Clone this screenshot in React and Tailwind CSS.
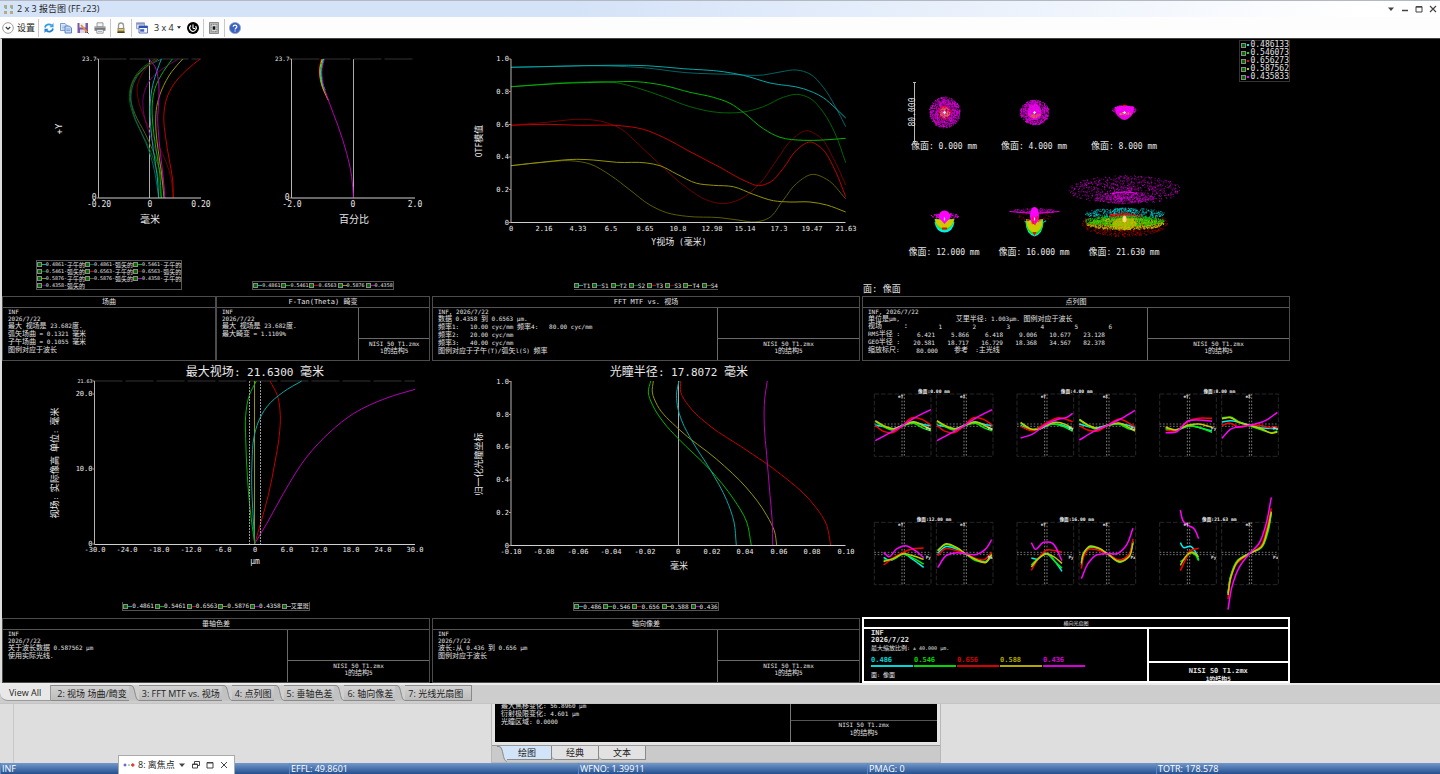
import { Fragment } from 'react'
import clsx from 'clsx'

const MONO = "[font-family:'DejaVu_Sans_Mono','Noto_Sans_CJK_SC',monospace]"
const UI = "[font-family:'Open_Sans','Noto_Sans_CJK_SC',sans-serif]"

const C = {
  cyan: '#00a8a8', green: '#00b400', red: '#c00000', yellow: '#949400', magenta: '#b400b4',
  dcyan: '#006464', dgreen: '#006400', dred: '#6e0000', dyellow: '#5c5c00', dmagenta: '#6a006a',
}
const BRIGHT = { cyan: '#00f0f0', green: '#00ee00', red: '#ff0000', yellow: '#c8c800', magenta: '#ff00ff' }

/* ---------- helpers ---------- */

// smooth path through a list of points, tangents weighted by chord length
function spline(pts) {
  const len = pts.slice(1).map((p, i) => Math.hypot(p[0] - pts[i][0], p[1] - pts[i][1]))
  const slope = (i, k) => (pts[i + 1][k] - pts[i][k]) / len[i]
  const tangent = (i, k) => {
    if (i === 0) return slope(0, k)
    if (i === pts.length - 1) return slope(i - 1, k)
    return (slope(i - 1, k) * len[i] + slope(i, k) * len[i - 1]) / (len[i - 1] + len[i])
  }
  let d = `M${pts[0][0]} ${pts[0][1]}`
  for (let i = 0; i < len.length; i++) {
    const h = len[i] / 3
    const [a, b] = [pts[i], pts[i + 1]]
    d += `C${a[0] + tangent(i, 0) * h} ${a[1] + tangent(i, 1) * h} ${b[0] - tangent(i + 1, 0) * h} ${b[1] - tangent(i + 1, 1) * h} ${b[0]} ${b[1]}`
  }
  return d
}

// "1,2 3,4" -> [[1,2],[3,4]]
const parse = (s) => s.trim().split(/\s+/).map(p => p.split(',').map(Number))

function rng(seed) {
  let a = seed
  return () => {
    a = (a + 0x6d2b79f5) | 0
    let t = Math.imul(a ^ (a >>> 15), 1 | a)
    t = (t + Math.imul(t ^ (t >>> 7), 61 | t)) ^ t
    return ((t ^ (t >>> 14)) >>> 0) / 4294967296
  }
}

// Han characters are set one step larger than the Latin ones
function Mix({ text, cjk, svg }) {
  return text.split(/([\u4e00-\u9fff]+)/).map((s, i) => {
    if (!s) return null
    if (i % 2 === 0) return <Fragment key={i}>{s}</Fragment>
    return svg ? <tspan key={i} className={cjk}>{s}</tspan> : <span key={i} className={cjk}>{s}</span>
  })
}

function Label({ x, y, text, size = 'text-[7px]', cjk = 'text-[9px]', anchor = 'middle', up }) {
  return (
    <text
      x={x} y={y} textAnchor={anchor} xmlSpace="preserve"
      className={clsx('fill-[#e8e8e8]', size)}
      transform={up ? `rotate(-90 ${x} ${y})` : undefined}
    >
      <Mix text={text} cjk={cjk} svg />
    </text>
  )
}

/* ---------- plots ---------- */

// All plots share one sheet coordinate system, the viewBox picks the cell.
function Plot({ view, box, xTicks, yTicks, curves, zero, topLine, tick = 'text-[7px]', tickDy = 6, children }) {
  const [l, t, r, b] = box
  return (
    <svg viewBox={view} className="block h-auto w-full">
      {zero && <path d={`M${zero} ${t}V${b}`} stroke="#aaa" strokeWidth="1" />}
      {topLine && <path d={`M${l} ${t}H${r}`} stroke="#333" strokeDasharray="28 3" />}
      {curves.map(([color, pts, w = 1], i) => (
        <path key={i} d={spline(parse(pts))} fill="none" stroke={color} strokeWidth={w} />
      ))}
      <path d={`M${l} ${t}V${b}`} fill="none" stroke="#b4b4b4" />
      <path d={`M${l} ${b}H${r}`} fill="none" stroke="#d0d0d0" />
      {xTicks.map((s, i) => (
        <Label key={s} x={Math.round(l + (r - l) * i / (xTicks.length - 1))} y={b + tickDy} text={s} size={tick} />
      ))}
      {yTicks.map(([y, s, size]) => (
        <Fragment key={s}>
          <path d={`M${l - 2} ${y}h2`} stroke="#999" />
          <Label x={l - 2} y={y + 2} text={s} size={size || tick} anchor="end" />
        </Fragment>
      ))}
      {children}
    </svg>
  )
}

const FIELD_CURVES = [
  [C.dgreen, '155.3,59 140,70 131.7,83.3 129.3,96.7 133.3,115 141.7,133.3 150,150 157.3,173.3 161.3,198'],
  [C.dyellow, '158.3,59 141.7,70 132.3,83.3 130.3,96.7 134.7,113.3 145,133.3 153.3,151.7 161,175 164.7,198'],
  [C.dcyan, '161.7,59 146.7,66.7 135,80 131,95 134,115 141.7,133.3 149.3,151.7 155.3,175 158.7,198'],
  [C.dred, '156.7,59 143.3,71.7 137.3,86.7 138.3,100 143.3,115 151.7,133.3 162.3,153.3 170.7,176.7 173.3,198'],
  [C.dmagenta, '178.3,59 163.3,68.3 150,80 143.3,96.7 144,115 149.3,133.3 156.7,153.3 162.7,176.7 164.7,198'],
  [C.cyan, '161.3,59 156.7,71.7 151.7,90 150,106.7 150.7,126.7 153.3,150 157.3,176.7 158.7,198'],
  [C.green, '172.3,59 163.3,71.7 155,88.3 152.3,103 152.7,123 155.7,147 159.7,173 161.3,198'],
  [C.red, '200,59 186.7,70 173.3,85 166.7,98.3 163.8,116.7 165.5,136.7 169.3,160 172.7,180 173.3,198'],
  [C.yellow, '182.7,59 171.7,71.7 161.7,90 156.7,106.7 155.7,123 157.7,147 161.5,173 164,198'],
  [C.magenta, '149,59 155,66.7 158.3,80 159,96.7 157.7,116.7 159,140 162,166.7 164,186.7 164.7,198'],
]

const DISTORTION_CURVES = [
  [BRIGHT.red, '321.4,59 319.4,68.3 321,83.3 328,100'],
  [BRIGHT.yellow, '322.2,59 320,68.3 321.4,83.3 328.2,100'],
  [BRIGHT.green, '323,59 320.7,68.3 321.8,83.3 326,94'],
  [BRIGHT.cyan, '323.7,59 321.5,68.3 322.5,83.3 325,90'],
  [C.magenta, '324.4,59 322,68.3 323,83.3 328.3,100 338.3,126.7 346.7,153.3 351.7,176.7 353.4,198'],
]

const MTF_CURVES = [
  [C.dcyan, '511,67.3 610,66 643.3,67.7 686.7,72.7 730,74.3 763.3,75 780,72 796.7,70 810,74 823.3,87.3 835,106 845.7,126.7'],
  [C.dgreen, '511,86.7 583.3,82 613.3,82.3 636.7,87.7 663.3,96.7 690,106.7 716.7,112.3 743.3,112 763.3,106.7 783.3,97.3 796.7,94.3 810,98.3 823.3,112.3 835,133.3 845.7,162.7'],
  [C.dred, '511,125.3 546.7,122.3 583.3,119.3 603.3,121.7 620,128.3 640,145.7 663.3,167.7 686.7,187.7 706.7,200 723.3,203.7 740,199.3 760,183.3 776.7,160 793.3,138.3 806.7,130.7 820,137.3 833.3,158.3 845.7,185'],
  [C.dyellow, '511,165.7 546.7,162 570,160.7 590,164 610,175 630,190 650,205 666.7,212.7 686.7,216.3 720,217.7 740,220.3 755,222 768.3,218.3 783.3,200 796.7,183.3 813.3,174.3 826.7,179.3 845.7,198.7'],
  [C.cyan, '511,67.3 560,66.3 610,65.3 646.7,65.7 683.3,68.7 723.3,71.7 743.3,75.3 770,83 803.3,88.7 823.3,97.7 835,107.7 845.7,118'],
  [C.green, '511,86.7 563.3,83.3 610,82 636.7,81.7 663.3,85.3 690,92.3 713.3,97.3 730,103.3 743.3,112.3 763.3,128.7 780,137.3 803.3,140.3 823.3,140 845.7,138.3'],
  [C.red, '511,125.3 546.7,124.3 580,125.3 620,125.7 643.3,129.3 663.3,137.3 690,151.7 720,167.3 746.7,181.7 758.3,185.7 770,182.3 783.3,168.3 796.7,150 810,142 821.7,148.3 833.3,166.7 845.7,196.7'],
  [C.yellow, '511,165.7 546.7,161.7 576.7,159.3 593.3,160 616.7,162.3 646.7,163 660,165.7 676.7,174 696.7,183.3 713.3,185.3 733.3,186.7 753.3,194.3 773.3,200.7 790,202 810,202 826.7,205 845.7,212'],
]

const LATERAL_CURVES = [
  [C.yellow, '254.5,381 254.5,544'],
  [C.red, '270,381 277.3,395.3 280.3,415.3 279.3,435.3 275,462 268.3,495.3 261,522 254.7,543.7'],
  [C.magenta, '415,389.3 386.7,398 353.3,413.7 330,432 306.7,457 283.3,493.7 266.7,523.7 254.7,543.7'],
  [C.cyan, '301.7,381 283.3,392 266.7,407 258.3,422 254,437 252,462 251.7,485.3 252.7,508.7 254.7,543.7'],
  [C.green, '256.3,381 249.3,395.3 245.7,415.3 245.7,438.7 247.3,475.3 250,508.7 254.7,543.7'],
]

const AXIAL_CURVES = [
  [C.green, '650.7,381 648.3,392 652.7,405.3 663.3,422 678.3,438.7 710,469.7 733.3,498.7 746.7,522 751.3,545.3'],
  [C.yellow, '653.3,381 652.3,392 657.3,405.3 678.3,428.7 716.7,459.3 746.7,488 766.7,515.3 774.7,532 776.7,545.3'],
  [C.cyan, '679,381 676.7,392 677.3,405.3 682.3,422 691.7,440.3 710,469.3 726.7,500.3 734,522 736.3,545.3'],
  [C.red, '680.7,381 680.7,392 688.3,405.3 710,426 743.3,448 780,473.7 810,500.3 826.7,525.3 830.7,545.3'],
  [C.magenta, '767.3,381 764.7,398.7 764.3,425.3 766.7,455.3 770,495.3 772.3,522 772.7,545.3'],
]

/* ---------- spot diagram ---------- */

// cloud of 1px rays inside an ellipse; pow < .5 pushes them to the rim
function Cloud({ cx, cy, rx, ry, n, color, seed = 1, pow = 0.5, top = -1, bottom = 1 }) {
  const rand = rng(seed * 977 + n)
  let d = ''
  for (let i = 0; i < n; i++) {
    const a = rand() * Math.PI * 2
    const r = Math.pow(rand(), pow)
    const v = Math.sin(a) * r
    if (v < top || v > bottom) continue
    d += `M${(cx + Math.cos(a) * r * rx).toFixed(1)} ${(cy + v * ry).toFixed(1)}h.8`
  }
  return <path d={d} stroke={color} strokeWidth=".8" fill="none" />
}

function SpotDiagram() {
  const B = BRIGHT
  return (
    <svg viewBox="862 39 428 245" className="block h-auto w-full">
      <path d="M914.5 82V142M913 82.5h3M913 141.5h3" stroke="#b8b8b8" fill="none" />
      <Label x={915} y={112} text="80.000" size="text-[8px]" up />

      {/* 0 mm */}
      <Cloud cx={944.5} cy={112.5} rx={15.5} ry={15.5} n={1250} color="#e000e0" seed={1} pow={0.6} />
      <Cloud cx={944.5} cy={112.5} rx={7} ry={7} n={90} color={B.red} seed={2} />
      <Cloud cx={944.5} cy={112.5} rx={5} ry={5} n={90} color="#e08060" seed={3} />
      {/* 4 mm */}
      <Cloud cx={1034.5} cy={112.5} rx={14.5} ry={12.5} n={950} color="#e000e0" seed={4} />
      <ellipse cx="1034.5" cy="112" rx="7" ry="8" fill={B.magenta} opacity=".75" />
      <Cloud cx={1034.5} cy={114} rx={6} ry={4} n={130} color="#e06050" seed={5} top={0} />
      {/* 8 mm */}
      <Cloud cx={1124.5} cy={110} rx={12.5} ry={4.5} n={210} color="#e000e0" seed={6} />
      <path d="M1115 107Q1124.5 104 1134 107Q1134 115 1129 118Q1124.5 122 1120 118Q1115 115 1115 107Z" fill={B.magenta} opacity=".9" />
      <path d="M1123 105.5h3" stroke={B.red} strokeWidth="1.5" />
      <Cloud cx={1124.5} cy={114} rx={6} ry={1.5} n={40} color="#e08040" seed={7} />

      {/* 12 mm */}
      <path d="M934.5 222Q936 232 944.5 232.5Q953 232 954.5 222Z" fill={B.cyan} />
      <path d="M934.5 219Q936 229 944.5 230.5Q953 229 954.5 219Z" fill={B.green} />
      <path d="M935 219Q944 221 954 219Q953 228 944.5 228.5Q936 228 935 219Z" fill="#d0c800" />
      <path d="M942 227.5h5v2h-5z" fill={B.red} />
      <Cloud cx={944.5} cy={216} rx={14} ry={3} n={150} color={B.magenta} seed={8} />
      <path d="M938.5 218Q939 210.5 944.5 210.5Q950 210.5 950.5 218Q948 220 944.5 224Q941 220 938.5 218Z" fill={B.magenta} />
      {/* 16 mm */}
      <path d="M1025.5 222Q1026 234 1034.5 236.5Q1043 234 1043.5 222Z" fill={B.cyan} />
      <path d="M1025.5 221Q1027 234 1034.5 235Q1042 234 1043.5 221Z" fill={B.green} />
      <path d="M1026 219Q1034.5 221 1043 219Q1042 232 1034.5 232.5Q1027 232 1026 219Z" fill="#d0c800" />
      <path d="M1032.5 232h4l-2 4z" fill={B.red} />
      <Cloud cx={1034.5} cy={216.5} rx={16} ry={5} n={60} color="#a00000" seed={9} pow={0.2} />
      <Cloud cx={1034.5} cy={221.5} rx={12} ry={1.5} n={20} color={B.cyan} seed={15} pow={0.1} />
      <Cloud cx={1034.5} cy={211} rx={22} ry={2.5} n={140} color="#d000d0" seed={10} />
      <path d="M1009.5 211.5L1034.5 213.5L1059.5 211.5" stroke="#e000e0" fill="none" />
      <ellipse cx="1034.5" cy="215.5" rx="4.5" ry="8.5" fill={B.magenta} />
      <Cloud cx={1034.5} cy={220} rx={4} ry={5} n={40} color={B.red} seed={11} />
      {/* 21.63 mm */}
      <Cloud cx={1124.5} cy={190} rx={56} ry={14.5} n={850} color="#c800c8" seed={12} pow={0.6} bottom={0.85} />
      <Cloud cx={1124.5} cy={198} rx={30} ry={6} n={380} color="#d800d8" seed={13} pow={0.7} />
      <path d="M1112 193.5Q1124.500 190.500 1137 193.500" fill="none" stroke={B.magenta} strokeWidth="1.5" opacity=".8" />
      <Cloud cx={1124.5} cy={214} rx={40} ry={6} n={430} color="#00d8d8" seed={14} pow={0.35} />
      <Cloud cx={1124.5} cy={213} rx={15} ry={5} n={200} color="#00d8d8" seed={24} />
      <Cloud cx={1124.5} cy={223} rx={43} ry={14} n={900} color="#c00000" seed={16} pow={0.5} top={-0.4} />
      <Cloud cx={1124.5} cy={216} rx={17} ry={3} n={220} color={B.red} seed={17} />
      <Cloud cx={1124.5} cy={224} rx={39} ry={6} n={1200} color="#c8c000" seed={19} />
      <Cloud cx={1124.5} cy={221} rx={40} ry={5} n={650} color="#00d800" seed={18} pow={0.4} />
      <ellipse cx="1124.5" cy="224" rx="12" ry="6" fill="#c8c000" opacity=".7" />
      <ellipse cx="1124.5" cy="219" rx="2" ry="3.5" fill="#ffd860" />

      {[944.5, 1034.5, 1124.5].map(x => (
        <g key={x} stroke="#ffd8e8" strokeWidth="1.2">
          <path d={`M${x - 1.5} 112.5h3M${x} 111v3`} />
          <path d={`M${x} 217.5v3`} />
        </g>
      ))}

      {[['0.000', '12.000'], ['4.000', '16.000'], ['8.000', '21.630']].map(([a, b], i) => (
        <Fragment key={a}>
          <Label x={944 + i * 90} y={149} text={`像面: ${a} mm`} size="text-[8px]" />
          <Label x={944 + i * 90} y={255} text={`像面: ${b} mm`} size="text-[8px]" />
        </Fragment>
      ))}
    </svg>
  )
}

/* ---------- ray fans ---------- */

const FANS = [
  {
    title: '0.00', x: 37, y: 42,
    a: {
      cyan: '40,135 70,141 95,146 123,136 155,127 185,134 207,137',
      green: '40,124 65,140 95,150 123,137 155,130 185,145 207,152',
      red: '40,137 65,154 90,158 123,136 150,113 180,118 207,136',
      yellow: '40,122 65,137 95,146 123,136 155,125 185,138 207,148',
      magenta: '40,182 90,155 123,136 160,112 207,89',
    },
    b: {
      cyan: '225,135 255,141 280,146 308,136 340,127 370,134 391,137',
      green: '225,124 250,140 280,150 308,137 340,130 370,145 391,152',
      red: '225,137 250,154 275,158 308,136 335,113 365,118 391,136',
      yellow: '225,122 250,137 280,146 308,136 340,125 370,138 391,148',
      magenta: '225,182 275,155 308,136 345,112 391,89',
    },
  },
  {
    title: '4.00', x: 465, y: 42,
    a: {
      cyan: '476,136 505,149 535,146 570,132 600,135 632,148',
      green: '476,129 505,149 551,136 575,132 605,140 632,154',
      red: '476,139 510,152 551,130 590,113 632,125',
      yellow: '476,127 505,146 530,148 551,137 580,127 610,133 632,146',
      magenta: '476,174 510,163 551,134 590,117 615,112 632,100',
    },
    b: {
      cyan: '652,132 700,144 736,136 775,131 819,142',
      green: '652,120 680,138 705,148 736,137 770,132 800,146 819,151',
      red: '652,137 680,151 710,152 736,136 770,118 819,140',
      yellow: '652,118 680,136 705,145 736,136 770,129 800,142 819,153',
      magenta: '652,180 700,152 736,136 775,117 819,91',
    },
  },
  {
    title: '8.00', x: 893, y: 42,
    a: {
      cyan: '911,148 945,150 985,137 1015,144 1050,153',
      green: '911,145 940,149 980,138 1010,142 1050,157',
      red: '911,150 940,153 980,123 1010,115 1050,115',
      yellow: '911,141 940,150 980,135 1010,132 1050,142',
      magenta: '911,158 940,157 980,122 1010,120 1050,124',
    },
    b: {
      cyan: '1080,126 1105,122 1163,136 1200,144 1246,146',
      green: '1080,114 1105,111 1130,125 1163,137 1200,150 1230,158 1246,153',
      red: '1080,137 1100,129 1130,141 1163,136 1200,137 1225,143 1246,140',
      yellow: '1080,116 1105,113 1130,127 1163,136 1200,147 1230,160 1246,156',
      magenta: '1080,175 1105,148 1163,136 1210,122 1246,97',
    },
  },
  {
    title: '12.00', x: 37, y: 427,
    a: {
      cyan: '65,532 80,541 125,521 155,540 185,562',
      green: '65,541 95,537 125,522 155,535 185,552',
      red: '65,555 95,533 123,517 150,507 185,504',
      yellow: '65,545 95,535 123,521 155,528 185,538',
      magenta: '65,517 80,530 105,506 130,497 160,512 185,533',
    },
    b: {
      cyan: '227,520 250,500 285,508 310,522 345,538 370,545 389,530',
      green: '227,510 250,494 285,505 310,521 345,543 370,546 389,521',
      red: '227,527 250,506 280,511 310,521 345,537 365,540 389,517',
      yellow: '227,513 250,492 285,503 310,521 345,540 370,548 389,524',
      magenta: '227,563 255,525 285,518 310,521 345,523 370,508 389,479',
    },
  },
  {
    title: '16.00', x: 465, y: 427,
    a: {
      cyan: '508,534 525,538 550,520 575,540 600,574',
      green: '508,555 535,530 555,521 580,545 600,565',
      red: '508,571 530,535 555,510 580,512 600,517',
      yellow: '508,561 530,535 553,521 575,530 600,550',
      magenta: '508,488 520,508 545,487 565,487 600,542',
    },
    b: {
      cyan: '658,556 665,526 685,502 710,506 736,521 775,541 800,526 813,484',
      green: '658,548 665,518 685,501 710,506 736,521 775,547 800,529 813,486',
      red: '658,566 665,530 680,508 705,509 736,521 775,540 800,525 813,477',
      yellow: '658,550 665,520 685,498 710,504 736,521 775,545 800,532 813,490',
      magenta: '658,596 680,548 700,527 736,521 765,521 790,500 813,445',
    },
  },
  {
    title: '21.63', x: 893, y: 427,
    a: {
      cyan: '955,488 965,503 985,499 1000,515 1010,540',
      green: '955,545 970,535 985,518 1000,525 1010,542',
      red: '955,572 970,540 985,512 1010,505',
      yellow: '955,556 975,525 990,516 1010,530',
      magenta: '955,390 965,425 980,437 995,445 1010,476',
    },
    b: {
      cyan: '1098,640 1107,588 1130,541 1163,520 1195,504 1216,456 1228,398',
      green: '1098,640 1106,588 1127,541 1163,520 1198,503 1217,458 1228,398',
      red: '1098,657 1105,600 1125,550 1163,520 1195,500 1213,450 1228,385',
      yellow: '1098,645 1107,590 1128,543 1163,520 1197,502 1215,455 1228,395',
      magenta: '1098,689 1110,620 1130,565 1163,520 1190,492 1210,440 1228,352',
    },
  },
]

// drawn at three units per pixel
function RayFans() {
  return (
    <svg viewBox="0 -54 1284 765" className="block h-auto w-full">
      {FANS.map(f => (
        <g key={f.title}>
          {[0, 186].map(dx => (
            <g key={dx} transform={`translate(${f.x + dx} ${f.y})`} fill="none">
              <rect width="170" height="187" stroke="#3a3a3a" strokeWidth="2" strokeDasharray="14 6" />
              <path d="M0 90H170M0 97H170" stroke="#888" strokeWidth="2.5" strokeDasharray="5 5" />
              <path d="M83 0V187M90 0V187" stroke="#999" strokeWidth="2.5" strokeDasharray="5 5" />
            </g>
          ))}
          {['a', 'b'].map(k => Object.entries(f[k]).map(([c, pts]) => (
            <path key={k + c} d={spline(parse(pts))} stroke={BRIGHT[c]} strokeWidth="4.5" fill="none" />
          )))}
          {[0, 186].map(dx => (
            <g key={dx} className="fill-[#ddd] text-[13px] font-bold">
              <text x={f.x + dx + 79} y={f.y + 12} textAnchor="middle">{dx ? 'eX' : 'eY'}</text>
              <text x={f.x + dx + 162} y={f.y + 109} textAnchor="middle">{dx ? 'Px' : 'Py'}</text>
            </g>
          ))}
          <text x={f.x + 179} y={f.y - 3} textAnchor="middle" className="fill-[#eee] text-[14px] font-bold">像面:{f.title} mm</text>
        </g>
      ))}
    </svg>
  )
}

/* ---------- legends and captions ---------- */

function Legend({ items, className, size = 'text-[5px] leading-[7px]', cjk = 'text-[6px]' }) {
  return (
    <div className="flex flex-1 items-end justify-center">
      <div className={clsx('border border-[#555]', size, className)}>
        {items.map(([name, color]) => (
          <label key={name} className="flex items-center whitespace-nowrap">
            <Tick />
            <span className="h-px w-1 shrink-0" style={{ background: color }} />
            <Mix text={name} cjk={cjk} />
          </label>
        ))}
      </div>
    </div>
  )
}

function Tick() {
  return <input type="checkbox" defaultChecked className="size-[5px] shrink-0 appearance-none border border-[#8c8c8c] checked:bg-[#006c00]" />
}

function Stamp({ bold }) {
  return (
    <div className={clsx('flex w-1/3 flex-col', bold ? 'border-l-2 border-white' : 'border-l border-[#6a6a6a]')}>
      <div className={clsx(bold ? 'h-[34px] border-b-2 border-white' : 'h-[31px] border-b border-[#6a6a6a]')} />
      <div className={clsx('text-center', bold ? 'pt-1 text-[7px] leading-[8px] font-bold' : 'pt-px')}>
        <p>NISI 50 T1.zmx</p>
        <p className={clsx(bold && 'text-[6px]')}><Mix text="1的结构5" cjk={bold ? 'text-[6px]' : 'text-[7px]'} /></p>
      </div>
    </div>
  )
}

function Info({ title, lines = [], stamp = true, children }) {
  return (
    <section className="flex h-[65px] flex-1 flex-col border border-[#4c4c4c] text-[6px] leading-[7px]">
      <h2 className="h-[11px] border-b border-[#555] text-center text-[7px] leading-[10px]">{title}</h2>
      <div className="flex flex-1">
        <div className="flex-1 px-[5px] whitespace-pre">
          {lines.map(l => <p key={l}><Mix text={l} cjk="text-[7px]" /></p>)}
          {children}
        </div>
        {stamp && <Stamp />}
      </div>
    </section>
  )
}

const SPOT_ROWS = [
  ['RMS半径 :', '6.421', '5.866', '6.418', '9.006', '10.677', '23.128'],
  ['GEO半径 :', '20.581', '18.717', '16.729', '18.368', '34.567', '82.378'],
]

function SpotTable() {
  return (
    <table className="table-fixed border-collapse">
      <thead>
        <tr>
          <th className="w-10 p-0 font-normal">
            <span className="flex justify-between text-[7px]"><span>视场</span><span>:</span></span>
          </th>
          {[1, 2, 3, 4, 5, 6].map(n => <th key={n} className="w-[34px] p-0 text-right font-normal">{n}</th>)}
        </tr>
      </thead>
      <tbody>
        {SPOT_ROWS.map(([name, ...vals]) => (
          <tr key={name}>
            <th className="p-0 text-left font-normal"><Mix text={name} cjk="text-[7px]" /></th>
            {vals.map(v => <td key={v} className="p-0 pr-[7px] text-right">{v}</td>)}
          </tr>
        ))}
        <tr>
          <th className="p-0 text-left font-normal"><Mix text="缩放标尺:" cjk="text-[7px]" /></th>
          <td className="p-0 pr-1 text-right">80.000</td>
          <td colSpan={5} className="p-0 pl-3"><Mix text="参考  :主光线" cjk="text-[7px]" /></td>
        </tr>
      </tbody>
    </table>
  )
}

const FAN_WAVES = [
  ['0.486', 'border-[#00d8d8] text-[#00d8d8]'],
  ['0.546', 'border-[#00d800] text-[#00d800]'],
  ['0.656', 'border-[#d80000] text-[#d80000]'],
  ['0.588', 'border-[#b0a800] text-[#b0a800]'],
  ['0.436', 'border-[#d800d8] text-[#d800d8]'],
]

function FanInfo() {
  return (
    <section className="flex h-[66px] flex-col overflow-hidden border-2 border-white text-[6px] leading-[7px]">
      <h2 className="h-[10px] border-b-2 border-white text-center text-[5px] leading-[8px]">横向光扇图</h2>
      <div className="flex flex-1">
        <div className="flex-1 pt-px pl-[7px]">
          <p className="text-[7px] font-bold">INF</p>
          <p className="text-[7px] font-bold">2026/7/22</p>
          <p className="text-[5px]"><Mix text="最大缩放比例: ± 40.000 μm." cjk="text-[6px]" /></p>
          <ul className="flex gap-px pt-[3px] text-[7px] leading-[10px] font-bold">
            {FAN_WAVES.map(([w, cls]) => <li key={w} className={clsx('w-[42px] border-b-2', cls)}>{w}</li>)}
          </ul>
          <p className="pt-1 text-[5px]"><Mix text="面: 像面" cjk="text-[6px]" /></p>
        </div>
        <Stamp bold />
      </div>
    </section>
  )
}

function Cell({ children }) {
  return <div className="relative flex min-w-0 flex-col">{children}</div>
}

function Report() {
  return (
    <main className={clsx('grid grid-cols-[1fr_1fr_1fr_148px] gap-x-[2px] gap-y-px border-t border-l-2 border-t-[#444] border-l-[#ddd] bg-black text-[#e0e0e0]', MONO)}>
      <Cell>
        <div className="flex flex-1 pb-[6px]">
          <div className="flex flex-1 flex-col">
            <Plot
              view="2 39 214 220" box={[98.5, 59, 201, 198]} zero={149.5} topLine tick="text-[8px]" tickDy={9}
              xTicks={['-0.20', '0', '0.20']} yTicks={[[59, '23.7', 'text-[6px]'], [198, '0']]} curves={FIELD_CURVES}
            >
              <Label x={150} y={223} text="毫米" cjk="text-[10px]" />
              <Label x={62} y={129} text="+Y" size="text-[9px]" up />
            </Plot>
            <Legend
              className="grid grid-cols-3"
              items={[
                ['0.4861-子午的', C.cyan], ['0.4861-弧矢的', C.dcyan], ['0.5461-子午的', C.green],
                ['0.5461-弧矢的', C.dgreen], ['0.6563-子午的', C.red], ['0.6563-弧矢的', C.dred],
                ['0.5876-子午的', C.yellow], ['0.5876-弧矢的', C.dyellow], ['0.4358-子午的', C.magenta],
                ['0.4358-弧矢的', C.dmagenta],
              ]}
            />
          </div>
          <div className="flex flex-1 flex-col">
            <Plot
              view="216 39 214 220" box={[291.5, 59, 415, 198]} zero={353.5} topLine tick="text-[8px]" tickDy={9}
              xTicks={['-2.0', '0', '2.0']} yTicks={[[59, '23.7', 'text-[6px]'], [198, '0']]} curves={DISTORTION_CURVES}
            >
              <Label x={354} y={223} text="百分比" cjk="text-[10px]" />
            </Plot>
            <Legend
              className="flex gap-px"
              items={[['0.4861', C.cyan], ['0.5461', C.green], ['0.6563', C.red], ['0.5876', C.yellow], ['0.4358', C.magenta]]}
            />
          </div>
        </div>
        <div className="flex">
          <Info title="场曲" stamp={false} lines={['INF', '2026/7/22', '最大 视场是 23.682度.', '弧矢场曲 = 0.1321 毫米', '子午场曲 = 0.1055 毫米', '图例对应于波长']} />
          <Info title="F-Tan(Theta) 畸变" lines={['INF', '2026/7/22', '最大 视场是 23.682度.', '最大畸变 = 1.1109%']} />
        </div>
      </Cell>

      <Cell>
        <div className="flex flex-1 flex-col pb-[6px]">
          <Plot
            view="432 39 428 240" box={[511, 59, 845.5, 222.5]}
            xTicks={['0', '2.16', '4.33', '6.5', '8.65', '10.8', '12.98', '15.14', '17.3', '19.47', '21.63']}
            yTicks={[[59, '1.0'], [91.5, '0.8'], [124.5, '0.6'], [157, '0.4'], [189.5, '0.2'], [222.5, '0']]}
            curves={MTF_CURVES} tickDy={8}
          >
            <Label x={679} y={245} text="Y视场 (毫米)" size="text-[8px]" />
            <Label x={482} y={141} text="OTF模值" size="text-[8px]" up />
          </Plot>
          <Legend
            className="flex gap-0.5 border-x-0 border-t-0" size="text-[6px] leading-[7px]"
            items={[['T1', C.cyan], ['S1', C.dcyan], ['T2', C.green], ['S2', C.dgreen], ['T3', C.red], ['S3', C.dred], ['T4', C.yellow], ['S4', C.dyellow]]}
          />
        </div>
        <div className="flex">
          <Info title="FFT MTF vs. 视场" lines={['INF, 2026/7/22', '数据 0.4358 到 0.6563 μm.', '频率1:   10.00 cyc/mm 频率4:   80.00 cyc/mm', '频率2:   20.00 cyc/mm', '频率3:   40.00 cyc/mm', '图例对应于子午(T)/弧矢l(S) 频率']} />
        </div>
      </Cell>

      <Cell>
        <SpotDiagram />
        <div className="absolute top-px right-0 border border-[#333] pl-px text-[8px] leading-[8px]">
          {[['0.486133', BRIGHT.cyan], ['0.546073', BRIGHT.green], ['0.656273', BRIGHT.red], ['0.587562', BRIGHT.yellow], ['0.435833', BRIGHT.magenta]].map(([v, c]) => (
            <label key={v} className="flex items-center">
              <Tick />
              <span className="mx-px size-[2px]" style={{ background: c }} />
              {v}
            </label>
          ))}
        </div>
        <p className="flex-1 pb-px pl-px text-[9px] leading-[11px]">面: 像面</p>
        <div className="flex">
          <Info title="点列图">
            <p>INF, 2026/7/22</p>
            <p className="flex gap-14"><span><Mix text="单位是μm," cjk="text-[7px]" /></span><span><Mix text="艾里半径: 1.003μm. 图例对应于波长" cjk="text-[7px]" /></span></p>
            <SpotTable />
          </Info>
        </div>
      </Cell>
      <div />

      <Cell>
        <div className="flex flex-1 flex-col pb-[7px]">
          <Plot
            view="2 362 428 240" box={[94.5, 381, 415, 544.5]} topLine zero={254.5} tickDy={7}
            xTicks={['-30.0', '-24.0', '-18.0', '-12.0', '-6.0', '0', '6.0', '12.0', '18.0', '24.0', '30.0']}
            yTicks={[[381, '21.63', 'text-[5px]'], [394, '20.0'], [469, '10.0'], [544, '0']]}
            curves={LATERAL_CURVES}
          >
            <path d="M249.5 381V544M260.5 381V544" stroke="#999" strokeDasharray="2 1" />
            <Label x={255} y={376} text="最大视场: 21.6300 毫米" size="text-[11px]" cjk="text-[12px]" />
            <Label x={255} y={564} text="μm" size="text-[8px]" />
            <Label x={58} y={463} text="视场: 实际像高 单位: 毫米" up />
          </Plot>
          <Legend
            className="flex gap-px border-t-0" size="text-[6px] leading-[8px]"
            items={[['0.4861', C.cyan], ['0.5461', C.green], ['0.6563', C.red], ['0.5876', C.yellow], ['0.4358', C.magenta], ['艾里斑', '#888']]}
          />
        </div>
        <div className="flex">
          <Info title="垂轴色差" lines={['INF', '2026/7/22', '关于波长数据 0.587562 μm', '使用实际光线.']} />
        </div>
      </Cell>

      <Cell>
        <div className="flex flex-1 flex-col pb-[7px]">
          <Plot
            view="432 362 428 240" box={[511, 381, 845.5, 545.5]} zero={678.5} tickDy={8}
            xTicks={['-0.10', '-0.08', '-0.06', '-0.04', '-0.02', '0', '0.02', '0.04', '0.06', '0.08', '0.10']}
            yTicks={[[381.5, '1.0'], [414.5, '0.8'], [447, '0.6'], [480, '0.4'], [512.5, '0.2'], [545.5, '0']]}
            curves={AXIAL_CURVES}
          >
            <Label x={679} y={376} text="光瞳半径: 17.8072 毫米" size="text-[11px]" cjk="text-[12px]" />
            <Label x={679} y={569} text="毫米" />
            <Label x={482} y={464} text="归一化光瞳坐标" up />
          </Plot>
          <Legend
            className="flex gap-0.5" size="text-[6px] leading-[7px]"
            items={[['0.486', C.cyan], ['0.546', C.green], ['0.656', C.red], ['0.588', C.yellow], ['0.436', C.magenta]]}
          />
        </div>
        <div className="flex">
          <Info title="轴向像差" lines={['INF', '2026/7/22', '波长:从 0.436 到 0.656 μm', '图例对应于波长']} />
        </div>
      </Cell>

      <Cell>
        <RayFans />
        <FanInfo />
      </Cell>
      <div />
    </main>
  )
}

/* ---------- window chrome ---------- */

function IconButton({ label, children }) {
  return <button type="button" aria-label={label} className="flex size-3.5 shrink-0 items-center justify-center">{children}</button>
}

const Rule = () => <span className="h-[18px] w-px bg-[#c8c8c8]" />

function TitleBar() {
  return (
    <header className="flex h-[17px] items-center border-t border-[#b4b8c0] bg-linear-to-r from-[#d5e3f8] from-40% to-white to-95% pl-[3px]">
      <svg viewBox="0 0 11 11" className="mr-[3px] size-[11px]">
        <path d="M1 1h3v3h-3zM7 1h3v3h-3zM1 7h3v3h-3zM7 7h3v3h-3z" fill="#c4a878" />
        <path d="M2 2h2v3h-2zM8 2h2v3h-2zM2 7h2v1h-2zM8 7h2v1h-2z" fill="#86b8a0" />
      </svg>
      <h1 className="flex-1 text-[9px] text-[#222]">2 x 3 报告图 (FF.r23)</h1>
      <IconButton label="选项"><svg viewBox="0 0 10 10" className="size-2.5"><path d="M2 3.5h6L5 7z" fill="#444" /></svg></IconButton>
      <IconButton label="最小化"><svg viewBox="0 0 10 10" className="size-2.5"><path d="M2 6.5h6" stroke="#444" strokeWidth="1.5" /></svg></IconButton>
      <IconButton label="最大化"><svg viewBox="0 0 10 10" className="size-2.5"><path d="M2 2.5h6v5.500h-6zM2 3.200h6" stroke="#444" fill="none" /></svg></IconButton>
      <IconButton label="关闭"><svg viewBox="0 0 10 10" className="size-2.5"><path d="M2 2l6 6M8 2l-6 6" stroke="#444" strokeWidth="1.2" /></svg></IconButton>
    </header>
  )
}

function Toolbar() {
  return (
    <div className="flex h-[21px] items-center gap-[3px] bg-[#fdfdfd] pl-0.5 text-[9px] text-[#222]">
      <button type="button" className="flex items-center gap-[3px]">
        <svg viewBox="0 0 12 12" className="size-3"><circle cx="6" cy="6" r="5.300" fill="#fff" stroke="#888" strokeWidth=".8" /><path d="M3.800 5L6 7.200 8.200 5" fill="none" stroke="#333" strokeWidth="1.200" /></svg>
        设置
      </button>
      <Rule />
      <IconButton label="刷新">
        <svg viewBox="0 0 12 12" className="size-3">
          <path d="M2 5.500C2.500 2.500 6 1.500 8.500 3.200" fill="none" stroke="#2f9fe0" strokeWidth="1.800" />
          <path d="M10.500 1v4.200H6.500z" fill="#2f9fe0" />
          <path d="M10 6.500C9.500 9.500 6 10.500 3.500 8.800" fill="none" stroke="#1f7fd0" strokeWidth="1.800" />
          <path d="M1.500 11V6.800h4z" fill="#1f7fd0" />
        </svg>
      </IconButton>
      <IconButton label="复制">
        <svg viewBox="0 0 12 12" className="size-3">
          <path d="M.5 1.500h4.500l2 2v5H.5z" fill="#dbe9fa" stroke="#5a86c8" strokeWidth=".8" />
          <path d="M1.800 4h3M1.800 5.500h3M1.800 7h3" stroke="#7fa6dc" strokeWidth=".6" />
          <path d="M5 4h4.500l2 2v5H5z" fill="#c3d9f5" stroke="#3f6fbc" strokeWidth=".8" />
          <path d="M6.300 7h4M6.300 8.500h4" stroke="#5a86c8" strokeWidth=".6" />
        </svg>
      </IconButton>
      <IconButton label="另存为">
        <svg viewBox="0 0 12 12" className="size-3">
          <path d="M.5 1h10.500v10H.5z" fill="#7a5aa8" />
          <path d="M2.500 1h6v4.500h-6z" fill="#eef0f8" />
          <path d="M3 7.500h5V11H3z" fill="#d9d4e8" />
          <path d="M4 3l6.500 7.500" stroke="#f08a30" strokeWidth="1.800" />
          <path d="M10 10l1.500 1.500" stroke="#333" strokeWidth="1" />
        </svg>
      </IconButton>
      <IconButton label="打印">
        <svg viewBox="0 0 12 12" className="size-3">
          <path d="M3 .8h6v4H3z" fill="#f4f4f4" stroke="#777" strokeWidth=".7" />
          <path d="M.5 4.500h11v4.200H.5z" fill="#777" />
          <path d="M1 5.200h10" stroke="#bbb" />
          <path d="M2.800 7.500h6.400v3.700H2.800z" fill="#fafafa" stroke="#777" strokeWidth=".7" />
          <path d="M4 9.300h4" stroke="#6a90c8" strokeWidth=".8" />
        </svg>
      </IconButton>
      <Rule />
      <IconButton label="锁定">
        <svg viewBox="0 0 12 12" className="size-3">
          <path d="M3.500 6.500V3.500a2.500 2.500 0 0 1 5 0V6.500" fill="none" stroke="#999" strokeWidth="1.300" />
          <path d="M2.500 6h7v5h-7z" fill="#9a8a50" /><path d="M2.500 9.500h7v1.500h-7z" fill="#4a4020" />
          <path d="M3.500 7h5v1.500h-5z" fill="#d8c88a" />
        </svg>
      </IconButton>
      <Rule />
      <IconButton label="窗口布局">
        <svg viewBox="0 0 12 12" className="size-3">
          <path d="M.5 .8h8v6h-8z" fill="#d4def2" stroke="#7a8ab0" strokeWidth=".7" /><path d="M.5 .8h8v1.800h-8z" fill="#8a98c0" />
          <path d="M3 4h8.500v7H3z" fill="#f6f8ff" stroke="#3a58b0" strokeWidth=".8" /><path d="M3 4h8.500v2H3z" fill="#3050b8" />
          <path d="M4.200 7.200h4v2.500h-4z" fill="#3f5fc8" />
        </svg>
      </IconButton>
      <button type="button" className="flex items-center gap-[3px] px-0.5">
        3 x 4
        <svg viewBox="0 0 4 3" className="h-[3px] w-1"><path d="M0 .3h4L2 2.800z" fill="#222" /></svg>
      </button>
      <IconButton label="重置">
        <svg viewBox="0 0 12 12" className="size-3">
          <circle cx="6" cy="6" r="6" fill="#000" />
          <path d="M8.600 4.200A3.200 3.200 0 1 1 4 3.500" fill="none" stroke="#fff" strokeWidth="1.200" />
          <path d="M6 2.500V6.500M6 6.500h2.200" stroke="#fff" strokeWidth="1.100" fill="none" />
        </svg>
      </IconButton>
      <Rule />
      <IconButton label="全屏">
        <svg viewBox="0 0 12 12" className="size-3">
          <path d="M1.500 .5h9v11h-9z" fill="#b8b8b8" stroke="#777" strokeWidth=".8" />
          <path d="M3.200 2.400h5.600v7.200H3.200z" fill="#d8d8d8" stroke="#555" strokeWidth=".7" strokeDasharray="1 .7" />
          <path d="M4.700 4.300h2.600v3.400H4.700z" fill="#111" />
        </svg>
      </IconButton>
      <Rule />
      <IconButton label="帮助">
        <svg viewBox="0 0 12 12" className="size-3">
          <circle cx="6" cy="6" r="5.600" fill="#3a62c0" stroke="#9aa8c8" strokeWidth=".8" />
          <path d="M4.200 4.700C4.200 2.600 7.900 2.600 7.900 4.700 7.900 6 6.100 6 6.100 7.400M6.100 8.400v1.200" fill="none" stroke="#fff" strokeWidth="1.200" />
        </svg>
      </IconButton>
    </div>
  )
}

function TabEdge({ from, to }) {
  return (
    <svg viewBox="0 0 10 16" className="h-4 w-2.5 shrink-0">
      <path d="M0 0H3C7 1 5 15 10 15.500H0z" fill={from} />
      <path d="M3 0H10V15.500C5 15 7 1 3 0z" fill={to} />
      <path d="M0 .5H2C7 1 5 15 10 15.500" fill="none" stroke="#8a8a8a" />
    </svg>
  )
}

const TABS = ['2: 视场 场曲/畸变', '3: FFT MTF vs. 视场', '4: 点列图', '5: 垂轴色差', '6: 轴向像差', '7: 光线光扇图']

function SheetTabs() {
  return (
    <nav className="flex h-5 items-start border-t-2 border-[#ececec] bg-[#cdcdcd] text-[9px] text-[#222]">
      <button type="button" className="h-4 rounded-bl-lg border-r border-b border-[#999] bg-[#e8e8e8] px-[9px] leading-[14px]">View All</button>
      {TABS.map((t, i) => (
        <Fragment key={t}>
          {i > 0 && <TabEdge from="#c2c2c2" to="#cfcfcf" />}
          <button
            type="button"
            className={clsx(
              'h-4 border-t border-b border-[#8a8a8a] bg-linear-to-b from-[#d2d2d2] to-[#bcbcbc] leading-[13px] whitespace-nowrap',
              i === 0 ? 'pl-1.5' : 'pl-[3px]',
              i === TABS.length - 1 ? 'border-r pr-2' : 'pr-0.5',
            )}
          >
            {t}
          </button>
        </Fragment>
      ))}
    </nav>
  )
}

function Desktop() {
  return (
    <div className="relative min-h-0 flex-1 border-t border-[#c4c4c4] bg-[#dedede] pl-[13px]">
      <div className="h-full border-l border-[#c8c8c8]">
        {/* focus shift window, mostly behind the report */}
        <section className="ml-[477px] flex h-[59px] w-[450px] flex-col overflow-hidden border-x border-b border-[#b8b8b8] bg-[#e4e4e4]">
          <div className={clsx('mx-[3px] flex h-[39px] overflow-hidden bg-black text-[6px] leading-[8px] whitespace-pre text-[#e0e0e0]', MONO)}>
            <div className="flex flex-1 flex-col justify-end pb-4 pl-1.5">
              {['最大焦移变化: 56.8960 μm', '衍射极限变化: 4.601 μm', '光瞳区域: 0.0000'].map(l => <p key={l} className="h-2 shrink-0"><Mix text={l} cjk="text-[7px]" /></p>)}
            </div>
            <div className="w-1/3 border-l border-[#777] text-center">
              <div className="h-[17px] border-b border-[#555]" />
              <p>NISI 50 T1.zmx</p>
              <p className="h-2"><Mix text="1的结构5" cjk="text-[7px]" /></p>
            </div>
          </div>
          <nav className="mt-[3px] flex flex-1 items-start border-t border-[#999] bg-[#cacaca] pl-[5px] text-[9px] leading-[13px] text-[#222]">
            <TabEdge from="#cacaca" to="#d2e4f8" />
            <button type="button" className="h-3.5 w-[45px] border-r border-b border-[#8a8a8a] bg-[#d2e4f8] pr-1">绘图</button>
            <button type="button" className="h-3.5 w-[47px] rounded-bl-sm border-r border-b border-[#8a8a8a] bg-[#e2e2e2]">经典</button>
            <button type="button" className="h-3.5 w-[47px] rounded-bl-sm border-r border-b border-[#8a8a8a] bg-[#e2e2e2]">文本</button>
          </nav>
        </section>
      </div>

      {/* minimised window */}
      <div className="absolute -bottom-[11px] left-[118px] flex h-[19px] w-[117px] items-start border-x border-t border-[#aaa] bg-white pt-0.5 pl-1 text-[9px] text-[#222]">
        <svg viewBox="0 0 12 14" className="mr-[3px] h-3.5 w-3 shrink-0">
          <path d="M.5 7h3M2 5.500v3" stroke="#3a3ad0" /><path d="M5 7h2" stroke="#60b060" /><path d="M8 7h3.500M9.800 5.200v3.600" stroke="#e03030" strokeWidth="1.400" />
        </svg>
        <span className="leading-[14px] whitespace-nowrap">8: 离焦点</span>
        <div className="flex">
          <IconButton label="菜单"><svg viewBox="0 0 10 10" className="size-2.5"><path d="M2 3.500h6L5 7z" fill="#444" /></svg></IconButton>
          <IconButton label="还原"><svg viewBox="0 0 10 10" className="size-2.5"><path d="M3.500 4V1.500h5v4H6.500M1.500 4h5v4h-5zM1.500 4.500h5" stroke="#444" fill="none" /></svg></IconButton>
          <IconButton label="最大化"><svg viewBox="0 0 10 10" className="size-2.5"><path d="M2 2.500h6v5.500h-6zM2 3h6" stroke="#444" fill="none" /></svg></IconButton>
          <IconButton label="关闭"><svg viewBox="0 0 10 10" className="size-2.5"><path d="M2 2l6 6M8 2l-6 6" stroke="#444" /></svg></IconButton>
        </div>
      </div>
    </div>
  )
}

function StatusBar() {
  return (
    <footer className="grid h-[11px] grid-cols-[289fr_289fr_289fr_289fr_284fr] bg-linear-to-b from-[#7299cc] to-[#24508f] text-[9px] leading-[11px] text-white">
      {['INF', 'EFFL: 49.8601', 'WFNO: 1.39911', 'PMAG: 0', 'TOTR: 178.578'].map(s => (
        <span key={s} className="border-l border-[#5f86bd] pl-px">{s}</span>
      ))}
    </footer>
  )
}

export default function App() {
  return (
    <div className={clsx('flex h-screen flex-col overflow-hidden', UI)}>
      <TitleBar />
      <Toolbar />
      <Report />
      <SheetTabs />
      <Desktop />
      <StatusBar />
    </div>
  )
}
